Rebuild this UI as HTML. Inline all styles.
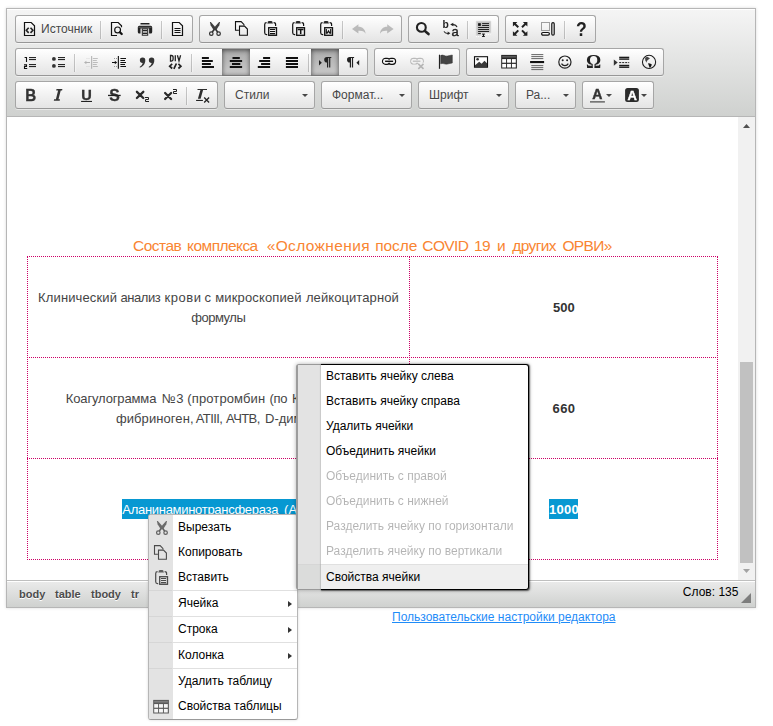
<!DOCTYPE html>
<html lang="ru">
<head>
<meta charset="utf-8">
<title>Editor</title>
<style>
*{box-sizing:content-box}
html,body{margin:0;padding:0;background:#fff}
body{width:773px;height:726px;overflow:hidden;position:relative;font-family:"Liberation Sans",sans-serif;font-size:12px;color:#000}
#cke{position:absolute;left:6px;top:8px;width:748px;height:598px;border:1px solid #b6b6b6;box-shadow:0 0 3px rgba(0,0,0,.15);background:#fff}
#top{position:absolute;left:0;top:0;width:732px;height:99px;padding:6px 8px 2px;border-bottom:1px solid #b6b6b6;background:#cfd1cf linear-gradient(to bottom,#f5f5f5,#cfd1cf);box-shadow:0 1px 0 #fff inset;white-space:nowrap}
.row{height:33px;clear:both}
.tg{float:left;margin:0 6px 5px 0;border:1px solid #a6a6a6;border-bottom-color:#979797;border-radius:3px;box-shadow:0 1px 0 rgba(255,255,255,.5),0 0 2px rgba(255,255,255,.15) inset,0 1px 0 rgba(255,255,255,.15) inset;background:#e4e4e4 linear-gradient(to bottom,#fff,#e4e4e4);height:26px}
.b{float:left;height:18px;padding:4px 6px;display:block}
.b.on{box-shadow:0 1px 5px rgba(0,0,0,.6) inset,0 1px 0 rgba(0,0,0,.2);background:#b5b5b5 linear-gradient(to bottom,#aaa,#cacaca)}
.b.dis svg{opacity:.3}
.b svg{will-change:transform;float:left;margin-top:1px;width:16px;height:16px;display:block;overflow:visible}
.b .l{float:left;padding-left:3px;width:51px;white-space:nowrap;margin-top:1px;line-height:17px;color:#474747;text-shadow:0 1px 0 rgba(255,255,255,.5);font-size:12px}
.b .ar{float:left;margin:8px 0 0 1px;width:0;height:0;border-left:3px solid transparent;border-right:3px solid transparent;border-top:3px solid #474747}
.sp{float:left;background:rgba(0,0,0,.2);margin:5px 2px 0;height:18px;width:1px;box-shadow:1px 0 1px rgba(255,255,255,.5)}
.cb{float:left;margin:0 6px 5px 0;border:1px solid #a6a6a6;border-bottom-color:#979797;border-radius:3px;box-shadow:0 1px 0 rgba(255,255,255,.5),0 0 2px rgba(255,255,255,.15) inset,0 1px 0 rgba(255,255,255,.15) inset;background:#e4e4e4 linear-gradient(to bottom,#fff,#e4e4e4);height:26px}
.cb .t{float:left;line-height:26px;padding-left:10px;width:60px;overflow:hidden;color:#474747;text-shadow:0 1px 0 rgba(255,255,255,.5);font-size:12px;white-space:nowrap}
.cb.s .t{width:30px}
.cb .o{float:left;height:19px;margin:1px 7px;width:5px}
.cb .o i{display:block;margin:11px 0 0;width:0;height:0;border-left:3px solid transparent;border-right:3px solid transparent;border-top:3px solid #474747}
#content{position:absolute;left:0;top:108px;width:748px;height:463px;background:#fff;overflow:hidden}
#bottom{position:absolute;left:0;top:571px;width:748px;height:26px;border-top:1px solid #bfbfbf;background:#cfd1cf linear-gradient(to bottom,#ebebeb,#cfd1cf);box-shadow:0 1px 0 #fff inset}

#content .t{margin-top:1px;position:absolute;white-space:pre;font-size:13px;line-height:20px;height:20px;color:#454545}
#content .t b{font-weight:bold;color:#333}
.hl{position:absolute;height:1px;left:20px;width:691px;background:repeating-linear-gradient(90deg,#cc0066 0,#cc0066 1px,transparent 1px,transparent 2px)}
.vl{position:absolute;width:1px;top:140px;height:302px;background:repeating-linear-gradient(180deg,#cc0066 0,#cc0066 1px,transparent 1px,transparent 2px)}
.sel{position:absolute;background:#0798d2;height:20px}
#sb{position:absolute;left:731px;top:0;width:17px;height:463px;background:#f1f1f1}
#sb .th{position:absolute;left:2px;top:245px;width:13px;height:201px;background:#c1c1c1}
#sb svg{position:absolute;left:0;top:0}
#bottom .p{position:absolute;top:7px;font-weight:bold;font-size:11px;line-height:13px;color:#4c4c4c;text-shadow:0 1px 0 #fff;white-space:pre}
#wc{position:absolute;right:16.6px;top:4px;font-size:12px;line-height:14px;color:#000;white-space:pre}
#rs{position:absolute;left:734px;top:12px;width:0;height:0;border-style:solid;border-width:10px 10px 0 0;border-color:transparent #666 transparent transparent;opacity:.8}
#lnk{position:absolute;left:392px;top:610px;font-size:12px;line-height:14px;color:#1f8cf8;text-decoration:underline;white-space:pre}

.menu{position:absolute;background:#fff;border:1px solid #b6b6b6;border-bottom-color:#999;border-radius:3px;box-shadow:0 0 3px rgba(0,0,0,.15);overflow:hidden}
.menu .ic{position:absolute;left:0;top:0;bottom:0;width:24px;background:#e3e3e3}
.mi{position:absolute;left:0;right:0;height:25px;font-size:12px;line-height:25px;color:#000;white-space:pre}
.mi span{position:absolute;left:29px;top:0}
.mi.d span{opacity:.3;will-change:transform}
.mi svg{position:absolute;left:4px;top:5px;opacity:.72;width:16px;height:16px;overflow:visible}
.mi i{position:absolute;right:5px;top:10px;width:0;height:0;border-top:3px solid transparent;border-bottom:3px solid transparent;border-left:4px solid #333}
.ms{position:absolute;left:0;right:0;height:1px;background:#e0e0e0}
.ms:before{content:"";position:absolute;left:0;top:0;width:23px;height:1px;background:#d6d6d6}
#m2 .mi span{left:28px}
#m2k{box-shadow:.5px .5px 1.5px rgba(0,0,0,.55);position:absolute;left:321px;top:364px;width:207px;height:224px;border:1px solid #000;border-left:0;border-radius:0 3px 3px 0;pointer-events:none}
</style>
</head>
<body>
<div id="cke">
<div id="top">
<div class="row">
 <div class="tg"><span class="b"><svg viewBox="0 0 16 16"><path d="M2.5 1.5h6.7l3.3 3.3v9.7h-10z" fill="none" stroke="#111" stroke-width="1.2" stroke-linejoin="miter"/><path d="M6.7 6.7 4.3 9.3l2.4 2.6M8.5 6.7l2.4 2.6-2.4 2.6" fill="none" stroke="#222" stroke-width="1.6"/></svg><span class="l">Источник</span></span><span class="sp"></span><span class="b"><svg viewBox="0 0 16 16"><path d="M12.5 6.2V4.8L9.2 1.5H2.5v13h5.5" fill="none" stroke="#111" stroke-width="1.2"/><circle cx="8.6" cy="8.9" r="2.9" fill="none" stroke="#111" stroke-width="1.2"/><path d="M10.9 11.2 12.7 13" stroke="#111" stroke-width="2.3" stroke-linecap="round"/></svg></span><span class="b"><svg viewBox="0 0 16 16"><rect x="3.4" y="1.9" width="9.2" height="1.7" rx=".6" fill="#222"/><path d="M2.3 4.7h11.4a1.5 1.5 0 0 1 1.5 1.5v4.7a1.5 1.5 0 0 1-1.5 1.5h-1.6V7.4H3.5v5H2.3A1.5 1.5 0 0 1 .8 10.9V6.2a1.5 1.5 0 0 1 1.5-1.5z" fill="#222"/><rect x="1.5" y="5.9" width="13" height=".5" fill="#999"/><rect x="5.3" y="7.9" width="5.4" height="6.3" fill="#f4f4f4" stroke="#222" stroke-width="1"/><rect x="5.7" y="9" width="4.6" height="1.3" fill="#222"/><rect x="5.7" y="11.6" width="4.6" height="1.4" fill="#222"/></svg></span><span class="sp"></span><span class="b"><svg viewBox="0 0 16 16"><path d="M2.5 1.5h6.7l3.3 3.3v9.7h-10z" fill="none" stroke="#111" stroke-width="1.2" stroke-linejoin="miter"/><path d="M4.5 7.5h6M4.5 9.5h6M4.5 11.5h6" stroke="#111" stroke-width="1.1" fill="none"/></svg></span></div>
 <div class="tg"><span class="b"><svg viewBox="0 0 16 16"><path d="M3.9.9h.9L7.7 4.2l2.7 3.2-1.5 2-1.6-.8L4.6 4.2z" fill="#3d3d3d"/><path d="M14 .9h-.9L10.2 4.2 7.5 7.4l1.5 2 1.6-.8 2.7-4.4z" fill="#3d3d3d"/><path d="M8 8.5 6.3 11.1M9.9 8.5l1.7 2.6" stroke="#2e2e2e" stroke-width="1.6" fill="none"/><circle cx="5.3" cy="12.7" r="1.75" fill="none" stroke="#2e2e2e" stroke-width="1.2"/><circle cx="12.6" cy="12.7" r="1.75" fill="none" stroke="#2e2e2e" stroke-width="1.2"/></svg></span><span class="b"><svg viewBox="0 0 16 16"><path d="M4.9 9.2H1.5V.6h5.6l2.8 2.8v1.2" fill="none" stroke="#111" stroke-width="1.1"/><path d="M5.5 5.1h5l2.9 2.9v6.2H5.5z" fill="none" stroke="#111" stroke-width="1.1"/></svg></span><span class="b"><svg viewBox="0 0 16 16"><path d="M5.2 13.6H4.6C3.4 13.6 2.7 12.9 2.7 11.8V3.4C2.7 2.3 3.4 1.6 4.6 1.6M11.6 1.6c1.2 0 2 .7 2 1.8v1.6" fill="none" stroke="#111" stroke-width="1.2"/><path d="M5.2 2.6 6.1.5Q6.3.1 6.7.1H9.5Q9.9.1 10.1.5L11 2.6z" fill="#2a2a2a"/><rect x="6.7" y="6.7" width="7.8" height="7.6" fill="none" stroke="#111" stroke-width="1.3"/><path d="M8 8.45h5.1M8 10.5h5.1M8 12.6h5.1" stroke="#111" stroke-width="1.1" fill="none"/></svg></span><span class="b"><svg viewBox="0 0 16 16"><path d="M5.2 13.6H4.6C3.4 13.6 2.7 12.9 2.7 11.8V3.4C2.7 2.3 3.4 1.6 4.6 1.6M11.6 1.6c1.2 0 2 .7 2 1.8v1.6" fill="none" stroke="#111" stroke-width="1.2"/><path d="M5.2 2.6 6.1.5Q6.3.1 6.7.1H9.5Q9.9.1 10.1.5L11 2.6z" fill="#2a2a2a"/><rect x="6.7" y="6.7" width="7.8" height="7.6" fill="none" stroke="#111" stroke-width="1.3"/><path d="M7.7 8.4h5.8M10.7 8.4v4.5" stroke="#111" stroke-width="1.5" fill="none"/></svg></span><span class="b"><svg viewBox="0 0 16 16"><path d="M5.2 13.6H4.6C3.4 13.6 2.7 12.9 2.7 11.8V3.4C2.7 2.3 3.4 1.6 4.6 1.6M11.6 1.6c1.2 0 2 .7 2 1.8v1.6" fill="none" stroke="#111" stroke-width="1.2"/><path d="M5.2 2.6 6.1.5Q6.3.1 6.7.1H9.5Q9.9.1 10.1.5L11 2.6z" fill="#2a2a2a"/><rect x="6.7" y="6.7" width="7.8" height="7.6" fill="none" stroke="#111" stroke-width="1.3"/><path d="M8.3 8v4.2h.8l1.4-2.3 1.4 2.3h.8V8" stroke="#111" stroke-width="1.2" fill="none"/></svg></span><span class="sp"></span><span class="b dis"><svg viewBox="0 0 16 16"><path d="M1 7.9 7.4 3.2v2.6c4.3 0 6.9 2.7 7.2 7-1.7-2.8-3.8-3.2-7.2-3v2.6z" fill="#3c3c3c"/></svg></span><span class="b dis"><svg viewBox="0 0 16 16"><path d="M14.6 7.9 8.2 3.2v2.6c-4.3 0-6.9 2.7-7.2 7 1.7-2.8 3.8-3.2 7.2-3v2.6z" fill="#3c3c3c"/></svg></span></div>
 <div class="tg"><span class="b"><svg viewBox="0 0 16 16"><circle cx="6.35" cy="6.4" r="4.4" fill="none" stroke="#222" stroke-width="2.1"/><path d="M9.9 10.1 13.5 13.1" stroke="#222" stroke-width="2.6" stroke-linecap="round"/></svg></span><span class="b"><svg viewBox="0 0 16 16"><text x="-.6" y="7.3" font-family="Liberation Sans" font-weight="bold" font-size="10.3" fill="#222">b</text><text x="8.5" y="15.4" font-family="Liberation Sans" font-size="13" fill="#222" stroke="#222" stroke-width=".4">a</text><path d="M14 6.2C13.4 4.4 11.6 3.5 9.5 3.6" fill="none" stroke="#222" stroke-width="1.1"/><path d="M7.2 3.5 10.3 1.8v3.5z" fill="#222"/><path d="M1 10.4C1.7 12 3.2 12.6 5 12.5" fill="none" stroke="#222" stroke-width="1.1"/><path d="M7.4 12.3 4.6 10.5v3.6z" fill="#222"/></svg></span><span class="sp"></span><span class="b"><svg viewBox="0 0 16 16"><path d="M.2.2h14.65v11.6H5.1v2.7H.2z" fill="#c4c4c4" stroke="#dcdcdc" stroke-width=".6"/><rect x="2.1" y="2.2" width="2.7" height="2.7" fill="#111"/><path d="M6.1 2.6h6.9M6.1 4.5h6.9M2.1 6.5h10.9M2.1 8.5h10.9M2.1 10.5h10.9M2.1 12.5h2.7" stroke="#111" stroke-width=".9" fill="none"/><path d="M10 13.5h4.5M0 15.6h5" stroke="#fff" stroke-width=".8" stroke-dasharray="1 1"/><path d="M6 13.1h2.9M6 15.4h2.9M7.5 13.1v2.3" stroke="#111" stroke-width="1" fill="none"/></svg></span></div>
 <div class="tg"><span class="b"><svg viewBox="0 0 16 16"><path d="M0.9 1L5.4 1L3.9 2.5L7 5.6L5.6 7L2.5 3.9L0.9 5.5zM15.4 1L10.9 1L12.4 2.5L9.3 5.6L10.7 7L13.8 3.9L15.4 5.5zM0.9 14.7L5.4 14.7L3.9 13.2L7 10.1L5.6 8.7L2.5 11.8L0.9 10.2zM15.4 14.7L10.9 14.7L12.4 13.2L9.3 10.1L10.7 8.7L13.8 11.8L15.4 10.2z" fill="#222"/></svg></span><span class="b"><svg viewBox="0 0 16 16"><rect x="1.5" y="1.5" width="8" height="8" fill="none" stroke="#444" stroke-width="1" stroke-dasharray="1 1"/><rect x="1.6" y="11.5" width="7.8" height="2.7" rx="1.35" fill="#f8f8f8" stroke="#111" stroke-width="1.2"/><rect x="11.8" y="1.6" width="2.4" height="12.6" rx="1.2" fill="#f8f8f8" stroke="#111" stroke-width="1.2"/></svg></span><span class="sp"></span><span class="b"><svg viewBox="0 0 16 16"><text transform="translate(8.45 15) scale(.88 1)" text-anchor="middle" font-family="Liberation Sans" font-weight="bold" font-size="20" fill="#222">?</text></svg></span></div>
</div>
<div class="row">
 <div class="tg"><span class="b"><svg viewBox="0 0 16 16"><path d="M2.6 3.5h1.9V8" fill="none" stroke="#111" stroke-width="1.1"/><path d="M2 10.9h2.5v1.6H2.5v2h2.7" fill="none" stroke="#111" stroke-width="1.1"/><path d="M7 3.6h7M7 5.6h7M7 10.6h7M7 12.6h7" stroke="#111" stroke-width="1" fill="none"/></svg></span><span class="b"><svg viewBox="0 0 16 16"><circle cx="3.9" cy="4.9" r="1.9" fill="#333"/><circle cx="3.9" cy="11.9" r="1.9" fill="#333"/><path d="M8 3.6h7M8 5.6h7M8 10.6h7M8 12.6h7" stroke="#111" stroke-width="1" fill="none"/></svg></span><span class="sp"></span><span class="b dis"><svg viewBox="0 0 16 16"><path d="M8.6 2v12.8" stroke="#333" stroke-width="1.2"/><path d="M7 8.5H2" stroke="#222" stroke-width="1"/><path d="M1 8.5 3.4 6.7v3.6z" fill="#222"/><path d="M3.5 4.5h1M5.5 4.5h1M3.5 12.5h1M5.5 12.5h1" stroke="#999" stroke-width="1"/><path d="M9.8 4.5h5M9.8 6.5h4M9.8 8.5h5M9.8 10.5h4M9.8 12.5h5" stroke="#444" stroke-width="1" fill="none"/></svg></span><span class="b"><svg viewBox="0 0 16 16"><path d="M7.4 2v12.8" stroke="#222" stroke-width="1.2"/><path d="M1 8.5h4" stroke="#111" stroke-width="1"/><path d="M6.2 8.5 3.8 6.7v3.6z" fill="#111"/><path d="M3 4.5h1M5 4.5h1M3 12.5h1M5 12.5h1" stroke="#999" stroke-width="1"/><path d="M9.4 4.5h5.6M9.4 6.5h4.6M9.4 8.5h5.6M9.4 10.5h4.6M9.4 12.5h5.6" stroke="#111" stroke-width="1" fill="none"/></svg></span><span class="b"><svg viewBox="0 0 16 16"><path d="M3.6 3.5a2.8 2.8 0 0 1 2.7 3c0 3.3-2.3 6.2-5.3 7.1l-.4-.7c1.7-.9 2.8-2.3 3.1-3.8A2.8 2.8 0 0 1 3.6 3.5zM12.6 3.5a2.8 2.8 0 0 1 2.7 3c0 3.3-2.3 6.2-5.3 7.1l-.4-.7c1.7-.9 2.8-2.3 3.1-3.8a2.8 2.8 0 0 1-.1-5.6z" fill="#333"/></svg></span><span class="b"><svg viewBox="0 0 16 16"><path d="M3.5 1.5v5.6h.9c1.2 0 1.7-.7 1.7-1.8V3.3c0-1.1-.5-1.8-1.7-1.8zM8.3 1.3v6M10.4 1.3l1.6 5.6 1.6-5.6" fill="none" stroke="#222" stroke-width="1.3"/><path d="M5.2 9.9 2.7 12.2l2.5 2.3M11.4 9.9l2.5 2.3-2.5 2.3M9.4 9.5 6.9 14.9" fill="none" stroke="#222" stroke-width="1.7"/></svg></span><span class="sp"></span><span class="b"><svg viewBox="0 0 16 16"><rect x="1.9" y="3" width="7" height="2" fill="#111"/><rect x="1.9" y="6" width="10.9" height="2" fill="#111"/><rect x="1.9" y="9" width="9" height="2" fill="#111"/><rect x="1.9" y="12" width="12.1" height="2" fill="#111"/></svg></span><span class="b on"><svg viewBox="0 0 16 16"><rect x="4.5" y="3" width="7.3" height="2" fill="#111"/><rect x="1.8" y="6" width="12.3" height="2" fill="#111"/><rect x="4" y="9" width="8.3" height="2" fill="#111"/><rect x="1.8" y="12" width="12.3" height="2" fill="#111"/></svg></span><span class="b"><svg viewBox="0 0 16 16"><rect x="7.1" y="3" width="7" height="2" fill="#111"/><rect x="3.2" y="6" width="10.9" height="2" fill="#111"/><rect x="5.1" y="9" width="9" height="2" fill="#111"/><rect x="1.8" y="12" width="12.3" height="2" fill="#111"/></svg></span><span class="b"><svg viewBox="0 0 16 16"><rect x="1.9" y="3" width="12.1" height="2" fill="#111"/><rect x="1.9" y="6" width="12.1" height="2" fill="#111"/><rect x="1.9" y="9" width="12.1" height="2" fill="#111"/><rect x="1.9" y="12" width="12.1" height="2" fill="#111"/></svg></span><span class="sp"></span><span class="b on"><svg viewBox="0 0 16 16"><path d="M2 6.1 4.8 8.85 2 11.6z" fill="#222"/><path d="M10 3h4.3v1h-1v9.4h-1.2V4h-.9v9.4h-1.2V8.6a2.8 2.8 0 0 1 0-5.6z" fill="#222"/></svg></span><span class="b"><svg viewBox="0 0 16 16"><path d="M14.2 6.1 11.4 8.85l2.8 2.75z" fill="#222"/><path d="M4.8 3h4.3v1h-1v9.4h-1.2V4h-.9v9.4h-1.2V8.6a2.8 2.8 0 0 1 0-5.6z" fill="#222"/></svg></span></div>
 <div class="tg"><span class="b"><svg viewBox="0 0 16 16"><rect x="1.55" y="4.35" width="7.4" height="5.9" rx="2.95" fill="none" stroke="#111" stroke-width="1.3"/><rect x="7.15" y="4.35" width="7.4" height="5.9" rx="2.95" fill="none" stroke="#111" stroke-width="1.3"/><rect x="2.2" y="5" width="6.1" height="4.6" rx="2.3" fill="#f3f3f3"/><rect x="7.8" y="5" width="6.1" height="4.6" rx="2.3" fill="#f3f3f3"/><path d="M4.1 7.3h8" stroke="#111" stroke-width="1.4"/></svg></span><span class="b dis"><svg viewBox="0 0 16 16"><rect x="1.75" y="4.4" width="7" height="5.6" rx="2.8" fill="none" stroke="#333" stroke-width="1.1"/><rect x="7.35" y="4.4" width="7" height="5.6" rx="2.8" fill="none" stroke="#333" stroke-width="1.1"/><rect x="2.3" y="4.95" width="5.9" height="4.5" rx="2.25" fill="#f3f3f3"/><rect x="7.9" y="4.95" width="5.9" height="4.5" rx="2.25" fill="#f3f3f3"/><rect x="9.8" y="8.6" width="6" height="3" fill="#f3f3f3"/><path d="M3.8 7.2h7.6" stroke="#333" stroke-width="1.2"/><path d="M9.3 9.8l5.2 5M14.5 9.8l-5.2 5" stroke="#333" stroke-width="1.6"/></svg></span><span class="b"><svg viewBox="0 0 16 16"><path d="M2.5 .7v14.1" stroke="#222" stroke-width="1.2"/><path d="M3.7 1.5c2.5-1.3 4 1 6.5.6 1.9-.3 3.5-1 5.1-1.1v8c-1.6.1-3.2.8-5.1 1.1-2.5.4-4-1.3-6.5-.3z" fill="#444" stroke="#2a2a2a" stroke-width=".5"/></svg></span></div>
 <div class="tg"><span class="b"><svg viewBox="0 0 16 16"><rect x="1.5" y="2.7" width="13" height="10.5" fill="#fff" stroke="#111" stroke-width="1.1"/><circle cx="4.6" cy="5.2" r="1.3" fill="#333"/><path d="M2 13V11.3L6.2 7.7l2.4 2 2.9-2.9 2.5 2.5V13z" fill="#3a3a3a"/></svg></span><span class="b"><svg viewBox="0 0 16 16"><rect x=".2" y=".9" width="15.7" height="13.6" fill="#262626"/><rect x="1.2" y="1.9" width="13.7" height="1.7" fill="#5a5a5a"/><g fill="#fff"><rect x="1.2" y="5.1" width="3.9" height="3.6"/><rect x="6.05" y="5.1" width="3.9" height="3.6"/><rect x="10.9" y="5.1" width="3.9" height="3.6"/><rect x="1.2" y="9.9" width="3.9" height="3.6"/><rect x="6.05" y="9.9" width="3.9" height="3.6"/><rect x="10.9" y="9.9" width="3.9" height="3.6"/></g></svg></span><span class="b"><svg viewBox="0 0 16 16"><path d="M2.3 .6h12M2.3 2.6h12M2.3 4.6h12M2.3 11.6h12M2.3 13.6h12M2.3 15.6h12" stroke="#666" stroke-width="1" fill="none"/><rect x="1.1" y="7" width="14" height="2.1" fill="#111"/></svg></span><span class="b"><svg viewBox="0 0 16 16"><circle cx="7.9" cy="8.1" r="6.1" fill="none" stroke="#222" stroke-width="1.2"/><circle cx="5.7" cy="6.3" r="1" fill="#222"/><circle cx="10.1" cy="6.3" r="1" fill="#222"/><path d="M4.5 9.6c1.5 2.7 5.3 2.7 6.8 0" fill="none" stroke="#222" stroke-width="1.2"/></svg></span><span class="b"><svg viewBox="0 0 16 16"><text x="8.7" y="14.3" text-anchor="middle" font-family="Liberation Serif" font-weight="bold" font-size="19" fill="#222">Ω</text></svg></span><span class="b"><svg viewBox="0 0 16 16"><path d="M.8 5.5 4.7 8.6.8 11.7z" fill="#333"/><rect x="6.2" y="2.7" width="10" height="1.4" fill="#1a1a1a"/><rect x="6.2" y="4.4" width="10" height="1.4" fill="#1a1a1a"/><path d="M6.2 8.6h10" stroke="#222" stroke-width="1" stroke-dasharray="2 1"/><rect x="6.2" y="10.8" width="10" height="1.4" fill="#1a1a1a"/><rect x="6.2" y="12.5" width="10" height="1.4" fill="#1a1a1a"/></svg></span><span class="b"><svg viewBox="0 0 16 16"><circle cx="8.05" cy="7.95" r="6.6" fill="none" stroke="#1c1c1c" stroke-width="1.05"/><path d="M4.1 3.8 6.1 2.8 9 4.2 6.9 6 5.9 7.1 5.5 8.7 4.3 6.5z" fill="#444"/><path d="M7 9.2l2 .3 1.9 1-.9 2-1.2 1.4L8 11.9z" fill="#151515"/></svg></span></div>
</div>
<div class="row">
 <div class="tg"><span class="b"><svg viewBox="0 0 16 16"><text transform="translate(3.2 13.7) scale(.93 1)" font-family="Liberation Sans" font-weight="bold" font-size="16.3" fill="#333" stroke="#333" stroke-width=".35">B</text></svg></span><span class="b"><svg viewBox="0 0 16 16"><path d="M6.5 2h5.9l-.3 1.4h-1.4L8.5 12.3H10l-.3 1.5H3.8l.3-1.5h1.8L8.1 3.4H6.2z" fill="#333"/></svg></span><span class="b"><svg viewBox="0 0 16 16"><text x="8.45" y="12.5" text-anchor="middle" font-family="Liberation Sans" font-weight="bold" font-size="14.6" fill="#333" stroke="#333" stroke-width=".3">U</text><rect x="3.1" y="13.9" width="10.9" height="1.1" fill="#222"/></svg></span><span class="b"><svg viewBox="0 0 16 16"><text x="8.4" y="13.5" text-anchor="middle" font-family="Liberation Sans" font-weight="bold" font-size="15.8" fill="#333" stroke="#333" stroke-width=".3">S</text><rect x="2" y="7.8" width="12.7" height="1.3" fill="#222"/></svg></span><span class="b"><svg viewBox="0 0 16 16"><path d="M2.9 4.8 9.3 11M9.3 4.8 2.9 11" stroke="#2b2b2b" stroke-width="2.3" stroke-linecap="round" fill="none"/><path d="M11 10.5H14.5V12.5H11.5V14.5H15" fill="none" stroke="#222" stroke-width="1"/></svg></span><span class="b"><svg viewBox="0 0 16 16"><path d="M3.1 6 9.1 12M9.1 6 3.1 12" stroke="#2b2b2b" stroke-width="2.3" stroke-linecap="round" fill="none"/><path d="M11 2.5H14.5V4.5H11.5V6.5H15" fill="none" stroke="#222" stroke-width="1"/></svg></span><span class="sp"></span><span class="b"><svg viewBox="0 0 16 16"><path d="M2.5 1.9H12v1.1H2.5zM5.4 2.9h2.7L5.6 11.7H2.9z" fill="#2e2e2e"/><rect x="1.1" y="12.9" width="6.8" height="1.1" fill="#222"/><path d="M9.2 10.5l4.9 5M14.1 10.5 9.2 15.5" stroke="#222" stroke-width="1.3"/></svg></span></div>
 <div class="cb"><span class="t">Стили</span><span class="o"><i></i></span></div>
 <div class="cb"><span class="t">Формат...</span><span class="o"><i></i></span></div>
 <div class="cb"><span class="t">Шрифт</span><span class="o"><i></i></span></div>
 <div class="cb s"><span class="t">Ра...</span><span class="o"><i></i></span></div>
 <div class="tg"><span class="b"><svg viewBox="0 0 16 16"><text x="8.4" y="12.2" text-anchor="middle" font-family="Liberation Sans" font-weight="bold" font-size="14" fill="#333" stroke="#333" stroke-width=".45">A</text><rect x="1" y="14" width="14.9" height="1.7" fill="#777"/></svg><span class="ar"></span></span><span class="b"><svg viewBox="0 0 16 16"><rect x="1.1" y="1.1" width="13.8" height="14" rx="2.5" fill="#2b2b2b"/><text x="8.1" y="12.6" text-anchor="middle" font-family="Liberation Sans" font-weight="bold" font-size="13" fill="#fff" stroke="#fff" stroke-width=".4">A</text></svg><span class="ar"></span></span></div>
</div>
</div>
<div id="content">
<div class="hl" style="top:139px"></div><div class="hl" style="top:240px"></div><div class="hl" style="top:341px"></div><div class="hl" style="top:442px"></div>
<div class="vl" style="left:20px"></div><div class="vl" style="left:402px"></div><div class="vl" style="left:710px"></div>
<div class="t" style="left:126.1px;top:118px;letter-spacing:-0.52px;font-size:15.5px;color:#f98532">Состав</div>
<div class="t" style="left:180.1px;top:118px;letter-spacing:-0.56px;font-size:15.5px;color:#f98532">комплекса</div>
<div class="t" style="left:259.7px;top:118px;letter-spacing:0.36px;font-size:15.5px;color:#f98532">«Осложнения</div>
<div class="t" style="left:368.3px;top:118px;letter-spacing:-0.10px;font-size:15.5px;color:#f98532">после</div>
<div class="t" style="left:415.3px;top:118px;letter-spacing:-0.60px;font-size:15.5px;color:#f98532">COVID</div>
<div class="t" style="left:467.0px;top:118px;letter-spacing:-0.60px;font-size:15.5px;color:#f98532">19</div>
<div class="t" style="left:489.9px;top:118px;font-size:15.5px;color:#f98532">и</div>
<div class="t" style="left:505.2px;top:118px;letter-spacing:-0.60px;font-size:15.5px;color:#f98532">других</div>
<div class="t" style="left:555.4px;top:118px;letter-spacing:-0.60px;font-size:15.5px;color:#f98532">ОРВИ»</div>
<div class="t" style="left:31.1px;top:170px;letter-spacing:0.13px">Клинический</div>
<div class="t" style="left:113.6px;top:170px;letter-spacing:-0.48px">анализ</div>
<div class="t" style="left:157.5px;top:170px;letter-spacing:0.56px">крови</div>
<div class="t" style="left:197.6px;top:170px">с</div>
<div class="t" style="left:208.3px;top:170px;letter-spacing:0.13px">микроскопией</div>
<div class="t" style="left:298.9px;top:170px;letter-spacing:0.09px">лейкоцитарной</div>
<div class="t" style="left:184.3px;top:190px;letter-spacing:-0.49px">формулы</div>
<div class="t" style="left:58.8px;top:271px;letter-spacing:-0.14px">Коагулограмма</div>
<div class="t" style="left:154.7px;top:271px;letter-spacing:0.70px">№3</div>
<div class="t" style="left:180.3px;top:271px;letter-spacing:0.12px">(протромбин</div>
<div class="t" style="left:262.6px;top:271px;letter-spacing:-0.38px">(по</div>
<div class="t" style="left:285.0px;top:271px">Квику), МНО,</div>
<div class="t" style="left:108.9px;top:291px;letter-spacing:0.09px">фибриноген,</div>
<div class="t" style="left:188.8px;top:291px;letter-spacing:-0.60px">АТIII,</div>
<div class="t" style="left:219.1px;top:291px;letter-spacing:-0.60px">АЧТВ,</div>
<div class="t" style="left:258.0px;top:291px">D-димер)</div>
<div class="t" id="n1" style="left:546px;top:180px"><b>500</b></div>
<div class="t" id="n2" style="left:545.5px;top:281px;letter-spacing:.4px"><b>660</b></div>
<div class="sel" style="left:115px;top:382px;width:194px"></div>
<div class="t" style="left:115.3px;top:382px;letter-spacing:-0.29px;color:#fff">Аланинаминотрансфераза</div>
<div class="t" style="left:277.1px;top:382px;color:#fff">(АЛТ)</div>
<div class="sel" style="left:542px;top:382px;width:29px"></div>
<div class="t" id="n3" style="left:542px;top:382px;letter-spacing:.3px;color:#fff"><b style="color:#fff">1000</b></div>
<div id="sb"><div class="th"></div><svg width="17" height="463" viewBox="0 0 17 463"><path d="M5 11 L8.5 7 L12 11Z" fill="#505050"/><path d="M5 452 L8.5 456 L12 452Z" fill="#a3a3a3"/></svg></div>
</div>
<div id="bottom"><span class="p" style="left:12px">body</span><span class="p" style="left:48px">table</span><span class="p" style="left:84px">tbody</span><span class="p" style="left:124px">tr</span><span id="wc">Слов: 135</span><div id="rs"></div></div>
</div>
<div id="lnk">Пользовательские настройки редактора</div>

<div class="menu" id="m1" style="left:148px;top:514px;width:148px;height:204px">
<div class="ic"></div>
<div class="mi" style="top:0"><svg viewBox="0 0 16 16"><path d="M3.9.9h.9L7.7 4.2l2.7 3.2-1.5 2-1.6-.8L4.6 4.2z" fill="#3d3d3d"/><path d="M14 .9h-.9L10.2 4.2 7.5 7.4l1.5 2 1.6-.8 2.7-4.4z" fill="#3d3d3d"/><path d="M8 8.5 6.3 11.1M9.9 8.5l1.7 2.6" stroke="#2e2e2e" stroke-width="1.6" fill="none"/><circle cx="5.3" cy="12.7" r="1.75" fill="none" stroke="#2e2e2e" stroke-width="1.2"/><circle cx="12.6" cy="12.7" r="1.75" fill="none" stroke="#2e2e2e" stroke-width="1.2"/></svg><span>Вырезать</span></div>
<div class="mi" style="top:25px"><svg viewBox="0 0 16 16"><path d="M4.9 9.2H1.5V.6h5.6l2.8 2.8v1.2" fill="none" stroke="#111" stroke-width="1.1"/><path d="M5.5 5.1h5l2.9 2.9v6.2H5.5z" fill="none" stroke="#111" stroke-width="1.1"/></svg><span>Копировать</span></div>
<div class="mi" style="top:50px"><svg viewBox="0 0 16 16"><path d="M5.2 13.6H4.6C3.4 13.6 2.7 12.9 2.7 11.8V3.4C2.7 2.3 3.4 1.6 4.6 1.6M11.6 1.6c1.2 0 2 .7 2 1.8v1.6" fill="none" stroke="#111" stroke-width="1.2"/><path d="M5.2 2.6 6.1.5Q6.3.1 6.7.1H9.5Q9.9.1 10.1.5L11 2.6z" fill="#2a2a2a"/><rect x="6.7" y="6.7" width="7.8" height="7.6" fill="none" stroke="#111" stroke-width="1.3"/><path d="M8 8.45h5.1M8 10.5h5.1M8 12.6h5.1" stroke="#111" stroke-width="1.1" fill="none"/></svg><span>Вставить</span></div>
<div class="ms" style="top:75px"></div>
<div class="mi" style="top:76px"><span>Ячейка</span><i></i></div>
<div class="ms" style="top:101px"></div>
<div class="mi" style="top:102px"><span>Строка</span><i></i></div>
<div class="ms" style="top:127px"></div>
<div class="mi" style="top:128px"><span>Колонка</span><i></i></div>
<div class="ms" style="top:153px"></div>
<div class="mi" style="top:154px"><span>Удалить таблицу</span></div>
<div class="mi" style="top:179px"><svg viewBox="0 0 16 16"><rect x=".2" y=".9" width="15.7" height="13.6" fill="#262626"/><rect x="1.2" y="1.9" width="13.7" height="1.7" fill="#5a5a5a"/><g fill="#fff"><rect x="1.2" y="5.1" width="3.9" height="3.6"/><rect x="6.05" y="5.1" width="3.9" height="3.6"/><rect x="10.9" y="5.1" width="3.9" height="3.6"/><rect x="1.2" y="9.9" width="3.9" height="3.6"/><rect x="6.05" y="9.9" width="3.9" height="3.6"/><rect x="10.9" y="9.9" width="3.9" height="3.6"/></g></svg><span>Свойства таблицы</span></div>
</div>
<div class="menu" id="m2" style="left:296px;top:364px;width:230px;height:224px;border-color:#999;border-left:2px solid #9c9c9c;box-shadow:0 0 4px rgba(0,0,0,.3)">
<div class="ic" style="width:23px"></div>
<div class="mi" style="top:-1px"><span>Вставить ячейку слева</span></div>
<div class="mi" style="top:24px"><span>Вставить ячейку справа</span></div>
<div class="mi" style="top:49px"><span>Удалить ячейки</span></div>
<div class="mi" style="top:74px"><span>Объединить ячейки</span></div>
<div class="mi d" style="top:99px"><span>Объединить с правой</span></div>
<div class="mi d" style="top:124px"><span>Объединить с нижней</span></div>
<div class="mi d" style="top:149px"><span>Разделить ячейку по горизонтали</span></div>
<div class="mi d" style="top:174px"><span>Разделить ячейку по вертикали</span></div>
<div class="ms" style="top:199px"></div>
<div class="mi" style="top:200px;background:#efefef"><div style="position:absolute;left:0;top:0;width:23px;height:25px;background:#dbdcdb"></div><span>Свойства ячейки</span></div>
</div>
<div id="m2k"></div>
</body>
</html>
